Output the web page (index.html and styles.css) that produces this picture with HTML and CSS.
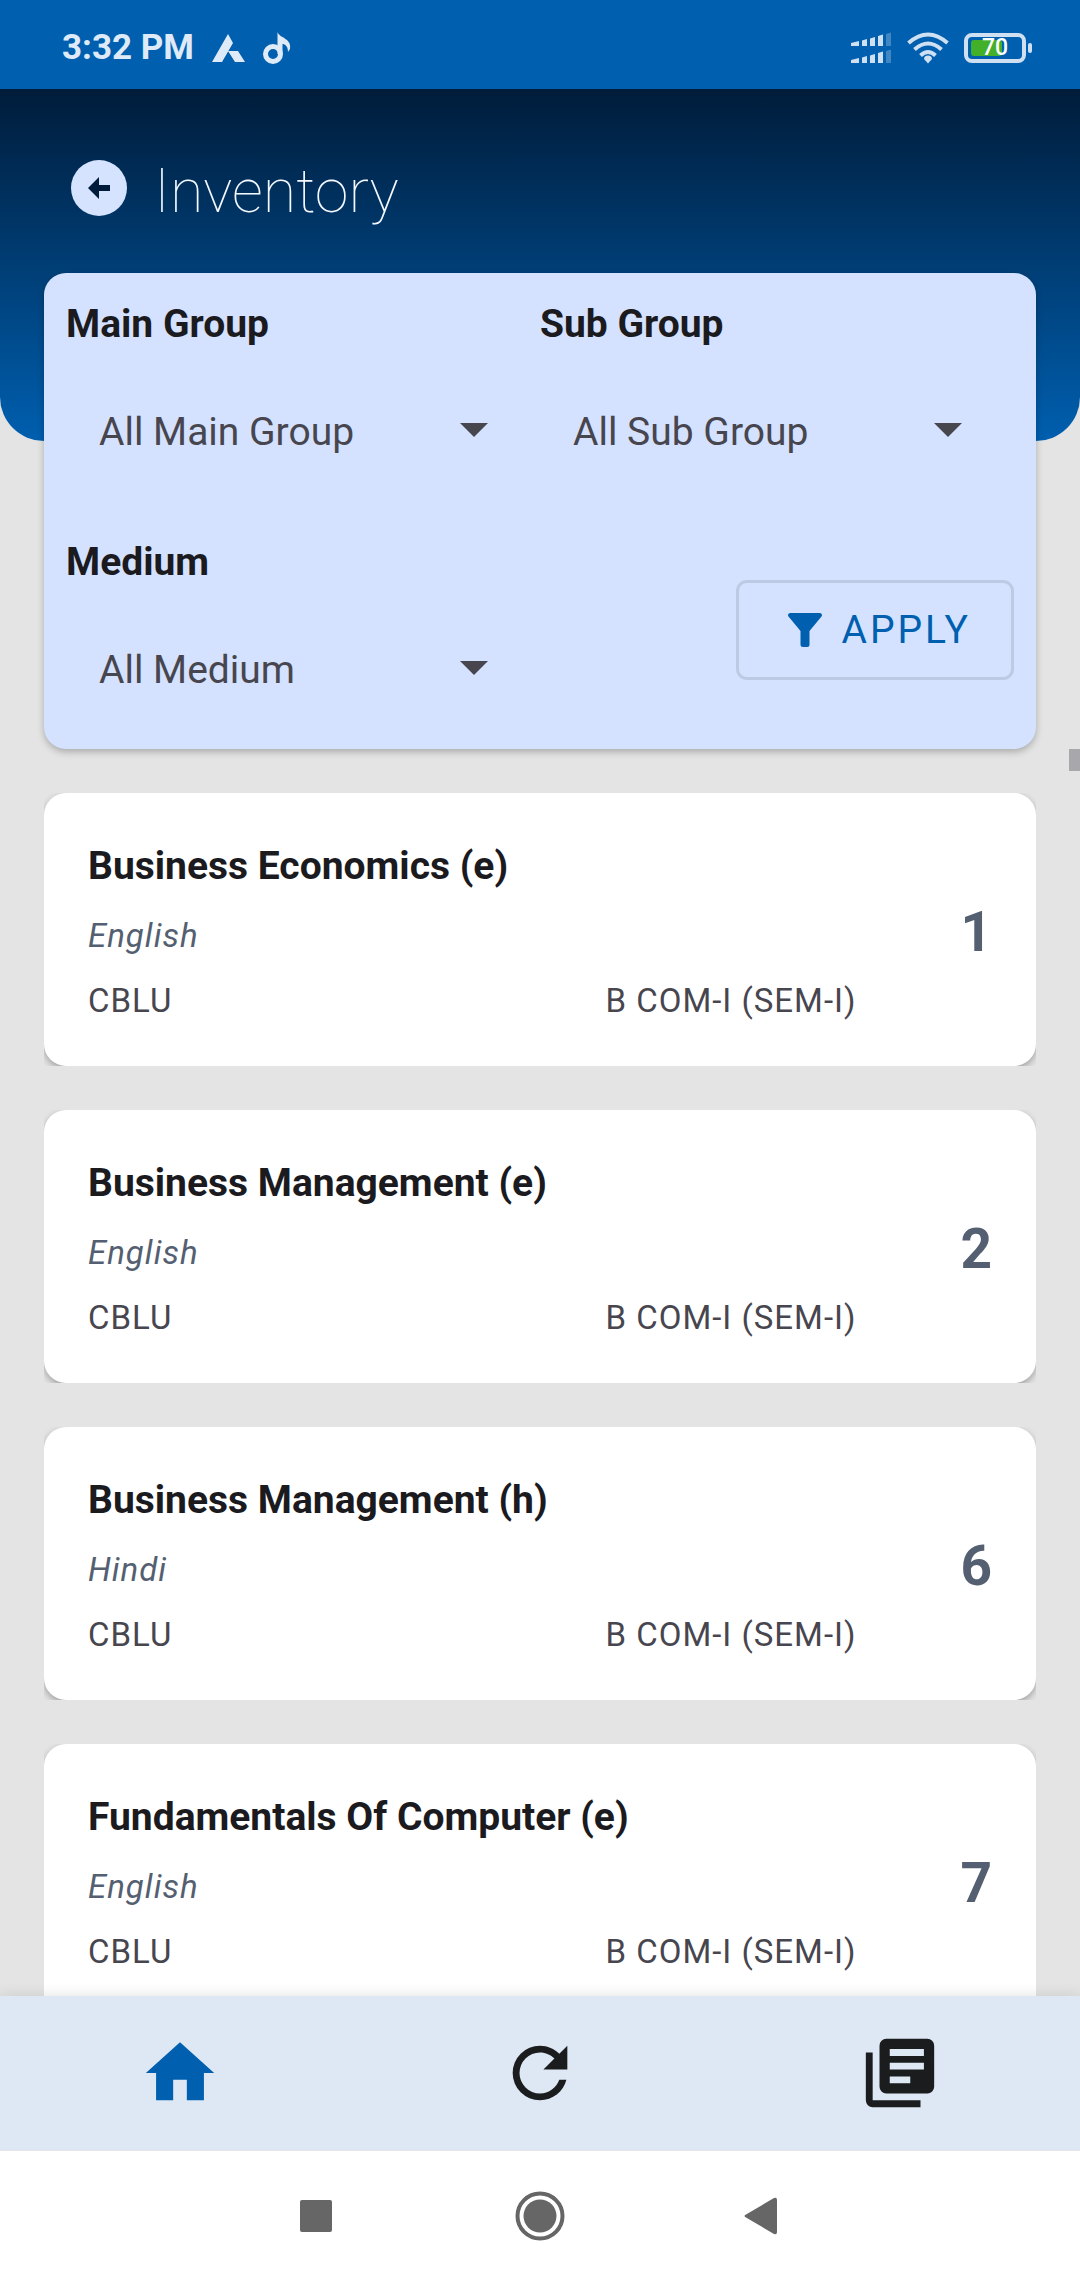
FILE: index.html
```html
<!DOCTYPE html>
<html lang="en">
<head>
    <meta charset="UTF-8">
    <meta name="viewport" content="width=device-width, initial-scale=1.0">
    <title>Inventory</title>
    <link rel="stylesheet" href="styles.css">
</head>
<body>
    <div class="status-bar">
        <div class="status-left">
            <span class="clock">3:32 PM</span>
            <svg class="app-icon" width="34" height="34" viewBox="0 0 34 34">
                <path d="M17 3L22 12L11 31H1ZM17 20H27L34 31H24Z"/>
            </svg>
            <svg class="note-icon" width="30" height="34" viewBox="0 0 30 34">
                <circle cx="11" cy="23" r="7.5"/>
                <path d="M15.500 1C17 7 30 7 28 18L26 21C26 14 22 13 20.500 13V23H15.500Z"/>
            </svg>
        </div>
        <div class="status-right">
            <svg width="42" height="34" viewBox="0 0 42 34">
                <path d="M1 12L9 10V15H1ZM12 9.500L17 8V15H12ZM20 7.500L25 6V15H20ZM28 5L33 3.500V15H28ZM1 29L9 27V32H1ZM12 26.500L17 25V32H12ZM20 24.500L25 23V32H20ZM28 22L33 20.500V32H28Z"/>
                <path class="dim" d="M36 3L41 1.500V15H36ZM36 20L41 18.500V32H36Z"/>
            </svg>
            <svg class="wifi" width="44" height="34" viewBox="0 0 44 34">
                <path d="M2.500 12Q22 -5 41.500 12M8.500 18.500Q22 6.500 35.500 18.500M14.500 24.500Q22 17.500 29.500 24.500"/>
                <path class="wifi-dot" d="M22 24.500Q26 24.500 26 28L22 32.500L18 28Q18 24.500 22 24.500Z"/>
            </svg>
            <div class="battery">
                <span class="battery-level"></span>
                <span class="battery-text">70</span>
            </div>
        </div>
    </div>

    <header class="header">
        <button class="back-button" aria-label="Back">
            <svg width="56" height="56" viewBox="0 0 56 56">
                <circle cx="28" cy="28" r="28"/>
                <path d="M17 28L28 17V25H39V31H28V39Z"/>
            </svg>
        </button>
        <h1>Inventory</h1>
    </header>

    <form class="filters">
        <div class="field">
            <label for="main-group">Main Group</label>
            <div class="select-box">
                <select id="main-group"><option>All Main Group</option></select>
            </div>
        </div>
        <div class="field">
            <label for="sub-group">Sub Group</label>
            <div class="select-box">
                <select id="sub-group"><option>All Sub Group</option></select>
            </div>
        </div>
        <div class="field">
            <label for="medium">Medium</label>
            <div class="select-box">
                <select id="medium"><option>All Medium</option></select>
            </div>
        </div>
        <button type="button" class="apply-button">
            <svg width="34" height="34" viewBox="0 0 34 34">
                <path d="M2 0H32Q35 1 33.500 3.500L21.500 18V31.500Q21.500 34 19 34H15Q12.500 34 12.500 31.500V18L0.500 3.500Q-1 1 2 0Z"/>
            </svg>
            APPLY
        </button>
    </form>

    <main class="list-area">
        <ul class="list">
            <li>
                <article class="card">
                    <div class="details">
                        <h2>Business Economics (e)</h2>
                        <p class="language">English</p>
                        <p class="meta"><span>CBLU</span><span>B COM-I (SEM-I)</span></p>
                    </div>
                    <span class="count">1</span>
                </article>
            </li>
            <li>
                <article class="card">
                    <div class="details">
                        <h2>Business Management (e)</h2>
                        <p class="language">English</p>
                        <p class="meta"><span>CBLU</span><span>B COM-I (SEM-I)</span></p>
                    </div>
                    <span class="count">2</span>
                </article>
            </li>
            <li>
                <article class="card">
                    <div class="details">
                        <h2>Business Management (h)</h2>
                        <p class="language">Hindi</p>
                        <p class="meta"><span>CBLU</span><span>B COM-I (SEM-I)</span></p>
                    </div>
                    <span class="count">6</span>
                </article>
            </li>
            <li>
                <article class="card">
                    <div class="details">
                        <h2>Fundamentals Of Computer (e)</h2>
                        <p class="language">English</p>
                        <p class="meta"><span>CBLU</span><span>B COM-I (SEM-I)</span></p>
                    </div>
                    <span class="count">7</span>
                </article>
            </li>
        </ul>
        <span class="scroll-thumb"></span>
    </main>

    <nav class="tabs">
        <a href="#home" class="active" aria-label="Home">
            <svg viewBox="0 0 24 24"><path d="M10,20V14H14V20H19V12H22L12,3L2,12H5V20H10Z"/></svg>
        </a>
        <a href="#refresh" aria-label="Refresh">
            <svg viewBox="0 0 24 24"><path d="M17.65,6.35C16.2,4.9 14.21,4 12,4A8,8 0 0,0 4,12A8,8 0 0,0 12,20C15.73,20 18.84,17.45 19.73,14H17.65C16.83,16.33 14.61,18 12,18A6,6 0 0,1 6,12A6,6 0 0,1 12,6C13.66,6 15.14,6.69 16.22,7.78L13,11H20V4L17.65,6.35Z"/></svg>
        </a>
        <a href="#library" aria-label="Library">
            <svg viewBox="0 0 24 24"><path fill-rule="evenodd" d="M8,2H20A2,2 0 0,1 22,4V16A2,2 0 0,1 20,18H8A2,2 0 0,1 6,16V4A2,2 0 0,1 8,2ZM9,5V7H19V5H9ZM9,9V11H19V9H9ZM9,13V15H15V13H9ZM4,6V20H18V22H4A2,2 0 0,1 2,20V6H4Z"/></svg>
        </a>
    </nav>

    <div class="system-nav">
        <button aria-label="Recent apps">
            <svg width="50" height="50" viewBox="0 0 50 50"><rect x="9" y="9" width="32" height="32" rx="2"/></svg>
        </button>
        <button aria-label="Home screen">
            <svg width="50" height="50" viewBox="0 0 50 50">
                <circle cx="25" cy="25" r="16.500"/>
                <circle class="ring" cx="25" cy="25" r="22.500"/>
            </svg>
        </button>
        <button aria-label="System back">
            <svg width="50" height="50" viewBox="0 0 50 50"><path d="M7 23.500L35 7Q38 6 38 9V41Q38 44 35 43L7 26.500Q4 25 7 23.500Z"/></svg>
        </button>
    </div>
</body>
</html>
```
FILE: styles.css
```css
* {
    box-sizing: border-box;
}
body {
    display: flex;
    flex-direction: column;
    height: 100vh;
    margin: 0;
    overflow: hidden;
    background: #e4e4e4;
    color: #1b1b1f;
    font-family: Roboto, sans-serif;
}
h1, h2, p, ul {
    margin: 0;
    padding: 0;
}
button {
    padding: 0;
    border: none;
    background: none;
    font-family: inherit;
    cursor: pointer;
}
svg {
    display: block;
}

/* status bar */
.status-bar {
    display: flex;
    flex-shrink: 0;
    justify-content: space-between;
    align-items: center;
    height: 89px;
    padding: 6px 48px 0 62px;
    background: #005faf;
    color: #deeaf8;
    fill: #deeaf8;
}
.status-left, .status-right {
    display: flex;
    align-items: center;
    gap: 17px;
}
.clock {
    font-size: 35px;
    font-weight: 700;
}
.note-icon circle {
    fill: none;
    stroke: #deeaf8;
    stroke-width: 5;
}
.status-right {
    gap: 14px;
    fill: #cfe0f3;
}
.dim {
    opacity: 0.3;
}
.wifi path {
    fill: none;
    stroke: #cfe0f3;
    stroke-width: 4;
}
.wifi .wifi-dot {
    fill: #cfe0f3;
    stroke: none;
}
.battery {
    position: relative;
    display: flex;
    justify-content: center;
    align-items: center;
    width: 62px;
    height: 30px;
    margin-right: 6px;
    border: 4px solid #cfe0f3;
    border-radius: 8px;
}
.battery::after {
    content: "";
    position: absolute;
    right: -10px;
    width: 4px;
    height: 10px;
    border-radius: 2px;
    background: #cfe0f3;
}
.battery-level {
    position: absolute;
    left: 3px;
    width: 31px;
    height: 16px;
    border-radius: 3px;
    background: #43b02a;
}
.battery-text {
    position: relative;
    color: white;
    font-size: 23px;
    font-weight: 500;
}

/* header */
.header {
    display: flex;
    flex-shrink: 0;
    align-items: flex-start;
    gap: 27px;
    height: 352px;
    padding: 64px 71px 0;
    border-radius: 0 0 44px 44px;
    background: linear-gradient(#001c3a, #005faf);
    color: #f4f8ff;
}
.back-button {
    margin-top: 7px;
}
.back-button circle {
    fill: #d5e3ff;
}
.back-button path {
    fill: #001c3a;
}
.header h1 {
    font-size: 61px;
    font-weight: 100;
    line-height: 76px;
}

/* filters, pulled up over the header */
.filters {
    position: relative;
    z-index: 1;
    display: grid;
    flex-shrink: 0;
    grid-template-columns: 1fr 1fr;
    margin: -168px 44px 0;
    padding: 0 22px;
    border-radius: 22px;
    background: #d4e2ff;
    box-shadow: 0 3px 7px rgba(0, 0, 0, 0.25);
}
.field {
    padding-top: 22px;
}
.field label {
    display: block;
    font-size: 39px;
    font-weight: 700;
    line-height: 58px;
}
.select-box {
    position: relative;
}
.select-box::after {
    content: "";
    position: absolute;
    top: 70px;
    right: 52px;
    border: 14px solid transparent;
    border-top-color: #47464f;
    border-bottom: none;
    pointer-events: none;
}
.field select {
    display: block;
    width: 100%;
    height: 158px;
    padding: 0 33px;
    border: none;
    background: none;
    color: #47464f;
    font-family: inherit;
    font-size: 39px;
    appearance: none;
    -webkit-appearance: none;
}
.apply-button {
    display: flex;
    justify-content: center;
    align-items: center;
    align-self: center;
    justify-self: end;
    gap: 19px;
    height: 100px;
    padding: 0 40px 0 49px;
    border: 3px solid #bccae4;
    border-radius: 11px;
    color: #005faf;
    font-size: 39px;
    letter-spacing: 3px;
}
.apply-button svg {
    fill: #005faf;
}

/* inventory list */
.list-area {
    position: relative;
    flex: 1;
    min-height: 0;
}
.list {
    display: flex;
    flex-direction: column;
    gap: 44px;
    height: 100%;
    padding: 44px 44px 0;
    overflow-y: auto;
    list-style: none;
    scrollbar-width: none;
}
.list li {
    flex-shrink: 0;
    overflow: hidden;
}
.card {
    display: flex;
    justify-content: space-between;
    align-items: center;
    gap: 10px;
    padding: 44px;
    border-radius: 22px;
    background: white;
    box-shadow: 0 3px 7px rgba(0, 0, 0, 0.3);
}
.details {
    flex: 1;
}
.card h2 {
    margin-bottom: 19px;
    font-size: 39px;
    font-weight: 700;
    line-height: 58px;
}
.language, .meta {
    font-size: 33px;
    line-height: 43px;
    letter-spacing: 1px;
}
.language {
    margin-bottom: 22px;
    color: #545f71;
    font-style: italic;
}
.meta {
    display: grid;
    grid-template-columns: 3fr 2fr;
    color: #47464f;
}
.count {
    padding-top: 5px;
    color: #545f71;
    font-size: 55px;
    font-weight: 700;
}
.scroll-thumb {
    position: absolute;
    top: 0;
    right: 0;
    width: 11px;
    height: 22px;
    background: #a8a8ac;
}

/* bottom tabs */
.tabs {
    position: relative;
    display: flex;
    flex-shrink: 0;
    height: 154px;
    background: #dee8f4;
    box-shadow: 0 0 14px rgba(0, 0, 0, 0.12);
}
.tabs a {
    display: flex;
    flex: 1;
    justify-content: center;
    align-items: center;
    color: #1a1c1e;
}
.tabs svg {
    width: 82px;
    height: 82px;
    fill: currentColor;
}
.tabs .active {
    color: #005faf;
}

.system-nav {
    position: relative;
    display: flex;
    flex-shrink: 0;
    justify-content: center;
    align-items: center;
    gap: 174px;
    height: 130px;
    border-top: 1px solid #e4e4e4;
    background: white;
    fill: #666;
}
.ring {
    fill: none;
    stroke: #666;
    stroke-width: 4;
}
```
